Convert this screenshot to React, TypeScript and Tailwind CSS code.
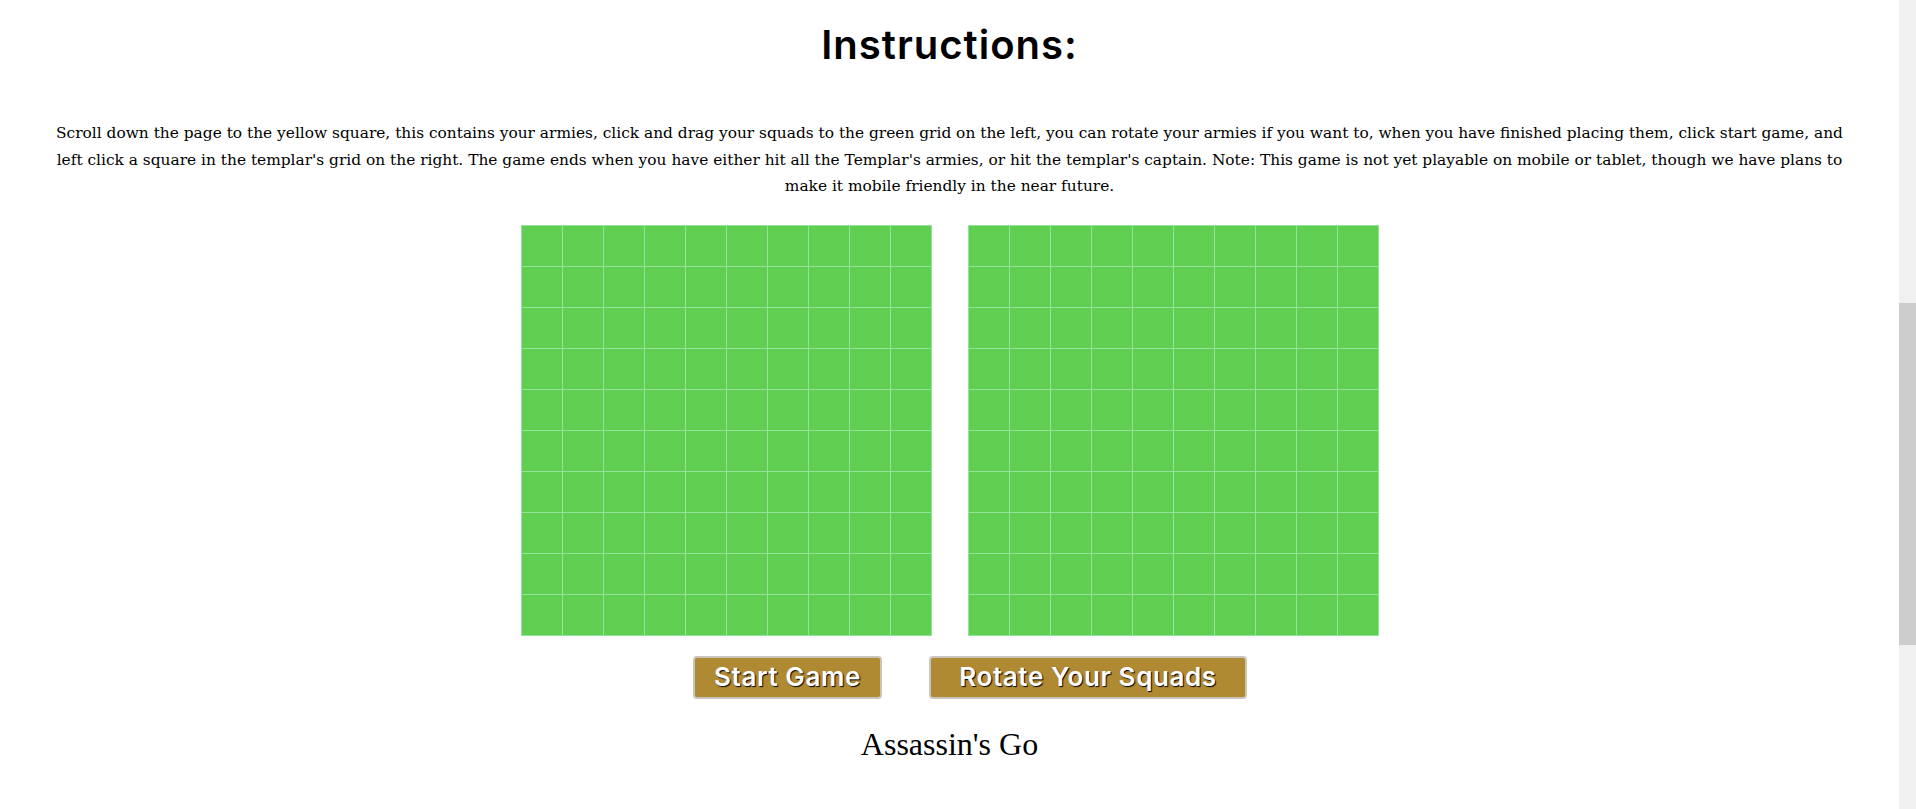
import React from "react";

const Grid = () => (
  <div className="grid grid-cols-10 gap-px bg-[#93e49a] p-px w-[411px] h-[411px]">
    {Array.from({ length: 100 }).map((_, i) => (
      <div key={i} className="bg-[#5fce51]" />
    ))}
  </div>
);

const btn =
  "h-[43px] rounded-[4px] border-2 border-[#c9c5bd] bg-[#b08a33] text-[26px] leading-none font-semibold tracking-[0.6px] text-white [text-shadow:1px_1px_1px_#000]";

export default function App() {
  return (
    <div className="flex h-[809px] w-full overflow-hidden bg-white">
      <div className="flex flex-1 flex-col items-center">
        <h1
          className="mt-[21px] text-[40px] leading-[48px] font-semibold tracking-[1px] text-black"
          style={{ fontFamily: '"Inter", "Noto Sans", sans-serif' }}
        >
          Instructions:
        </h1>
        <p
          className="mt-[51px] px-[50px] text-center text-[15.4px] leading-[26.5px] text-black"
          style={{ fontFamily: '"DejaVu Serif", "Liberation Serif", serif' }}
        >
          Scroll down the page to the yellow square, this contains your armies, click and drag your squads to the green grid on the left, you can rotate your armies if you want to, when you have finished placing them, click start game, and left click a square in the templar's grid on the right. The game ends when you have either hit all the Templar's armies, or hit the templar's captain. Note: This game is not yet playable on mobile or tablet, though we have plans to make it mobile friendly in the near future.
        </p>
        <div className="mt-[25px] flex gap-[36px]">
          <Grid />
          <Grid />
        </div>
        <div className="mt-[20px] flex gap-[47px] pl-[41px]">
          <button
            className={"w-[189px] " + btn}
            style={{ fontFamily: '"Inter", "Noto Sans", sans-serif' }}
          >
            Start Game
          </button>
          <button
            className={"w-[318px] " + btn}
            style={{ fontFamily: '"Inter", "Noto Sans", sans-serif' }}
          >
            Rotate Your Squads
          </button>
        </div>
        <div
          className="mt-[28px] text-[32px] leading-[34px] text-black"
          style={{ fontFamily: '"Liberation Serif", serif' }}
        >
          Assassin's Go
        </div>
      </div>
      <div className="flex w-[17px] flex-col bg-[#f0f0f0]">
        <div className="mt-[303px] h-[342px] w-full bg-[#cdcdcd]" />
      </div>
    </div>
  );
}
